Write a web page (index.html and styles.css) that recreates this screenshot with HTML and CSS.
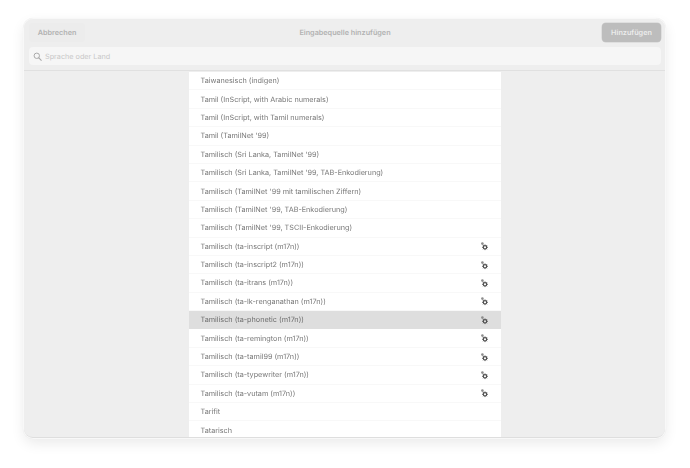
FILE: index.html
```
<!DOCTYPE html>
<html lang="de">
<head>
<meta charset="utf-8">
<title>Eingabequelle hinzufügen</title>
<link rel="stylesheet" href="styles.css">
</head>
<body>
<div class="window">
  <header class="header">
    <div class="titlebar">
      <button class="btn btn-cancel">Abbrechen</button>
      <div class="title">Eingabequelle hinzufügen</div>
      <button class="btn btn-add">Hinzufügen</button>
    </div>
    <div class="search">
      <svg class="search-icon" viewBox="0 0 10 10" width="9" height="9"><circle cx="4.2" cy="4.2" r="3" fill="none" stroke="#a8a8a8" stroke-width="1.1"/><path d="M6.5 6.5 9.2 9.2" stroke="#a8a8a8" stroke-width="1.2" stroke-linecap="round"/></svg>
      <span class="placeholder">Sprache oder Land</span>
    </div>
  </header>
  <main class="content">
    <svg width="0" height="0" class="defs"><symbol id="cog" viewBox="0 0 10 10"><circle cx="3.4" cy="2.6" r="1.3" fill="#8c8c8c"/><path d="M3.9 3.4 4.8 4.8" stroke="#989898" stroke-width=".9"/><circle cx="6" cy="6.3" r="1.7" fill="none" stroke="#505050" stroke-width="1.2"/><path d="M6 3.5v.9M6 8.2v.9M3.2 6.3h.9M7.9 6.3h.9M4.1 4.4l.6.6M7.3 7.6l.6.6M4.1 8.2l.6-.6M7.3 5l.6-.6" stroke="#505050" stroke-width="1"/></symbol></svg>
    <ul class="list">
      <li class="row">Taiwanesisch (indigen)</li>
      <li class="row">Tamil (InScript, with Arabic numerals)</li>
      <li class="row">Tamil (InScript, with Tamil numerals)</li>
      <li class="row">Tamil (TamilNet '99)</li>
      <li class="row">Tamilisch (Sri Lanka, TamilNet '99)</li>
      <li class="row">Tamilisch (Sri Lanka, TamilNet '99, TAB-Enkodierung)</li>
      <li class="row">Tamilisch (TamilNet '99 mit tamilischen Ziffern)</li>
      <li class="row">Tamilisch (TamilNet '99, TAB-Enkodierung)</li>
      <li class="row">Tamilisch (TamilNet '99, TSCII-Enkodierung)</li>
      <li class="row">Tamilisch (ta-inscript (m17n))<svg class="cog"><use href="#cog"/></svg></li>
      <li class="row">Tamilisch (ta-inscript2 (m17n))<svg class="cog"><use href="#cog"/></svg></li>
      <li class="row">Tamilisch (ta-itrans (m17n))<svg class="cog"><use href="#cog"/></svg></li>
      <li class="row">Tamilisch (ta-lk-renganathan (m17n))<svg class="cog"><use href="#cog"/></svg></li>
      <li class="row selected">Tamilisch (ta-phonetic (m17n))<svg class="cog"><use href="#cog"/></svg></li>
      <li class="row">Tamilisch (ta-remington (m17n))<svg class="cog"><use href="#cog"/></svg></li>
      <li class="row">Tamilisch (ta-tamil99 (m17n))<svg class="cog"><use href="#cog"/></svg></li>
      <li class="row">Tamilisch (ta-typewriter (m17n))<svg class="cog"><use href="#cog"/></svg></li>
      <li class="row">Tamilisch (ta-vutam (m17n))<svg class="cog"><use href="#cog"/></svg></li>
      <li class="row">Tarifit</li>
      <li class="row">Tatarisch</li>
    </ul>
  </main>
</div>
</body>
</html>
```
FILE: styles.css
```
* { box-sizing: border-box; }
html, body { margin: 0; height: 100%; background: #fff; overflow: hidden; }
body { padding: 19px 24px 30px; font-family: Inter, "Liberation Sans", sans-serif; text-rendering: geometricPrecision; }
.window {
  width: 641px; height: 419px; display: flex; flex-direction: column;
  background: #eeeeee; border-radius: 9px; overflow: hidden;
  box-shadow: 0 0 0 1px #f8f8f8, 0 0 1px 1px #e4e4e4, 0 5px 14px rgba(0,0,0,.09);
  border-bottom: 1px solid #dedede;
  filter: blur(.3px);
}
.header {
  flex: none; height: 51.5px; padding: 4px 4px 0 5px; background: #eeeeee;
  border-bottom: 1px solid #e0e0e0;
  position: relative; z-index: 1;
}
.titlebar { display: flex; align-items: center; justify-content: space-between; height: 19px; }
.btn { height: 19px; border: 0; border-radius: 4px; font: 600 7.25px Inter, "Liberation Sans", sans-serif; padding: 0; text-rendering: geometricPrecision; }
.btn-cancel { width: 56px; background: #ececec; color: #b2b2b2; }
.btn-add { width: 59px; background: #bdbdbd; color: #ececec; box-shadow: 0 0 0 .5px #d0d0d0; }
.title { font-size: 7.25px; font-weight: 600; color: #b2b2b2; margin-left: 3px; }
.search {
  height: 18px; margin-top: 5px; background: #f6f6f6; border-radius: 4px; display: flex; align-items: center;
  padding-left: 4px; gap: 3px;
}
.search-icon { flex: none; }
.placeholder { font-size: 7.25px; color: #c8c8c8; }
.content { flex: 1; min-height: 0; display: flex; justify-content: center; overflow: hidden; }
.defs { position: absolute; }
.list { list-style: none; margin: 1.5px 0 0; padding: 0; width: 312px; background: #fff; overflow: hidden; }
.row {
  height: 18.4px; display: flex; align-items: center; justify-content: space-between;
  padding: 0 12px; font-size: 7.25px; color: #787878; border-bottom: 1px solid #f8f8f8;
}
.row.selected { background: #dedede; color: #6e6e6e; border-bottom-color: #dedede; }
.cog { width: 10px; height: 10px; flex: none; }
```
